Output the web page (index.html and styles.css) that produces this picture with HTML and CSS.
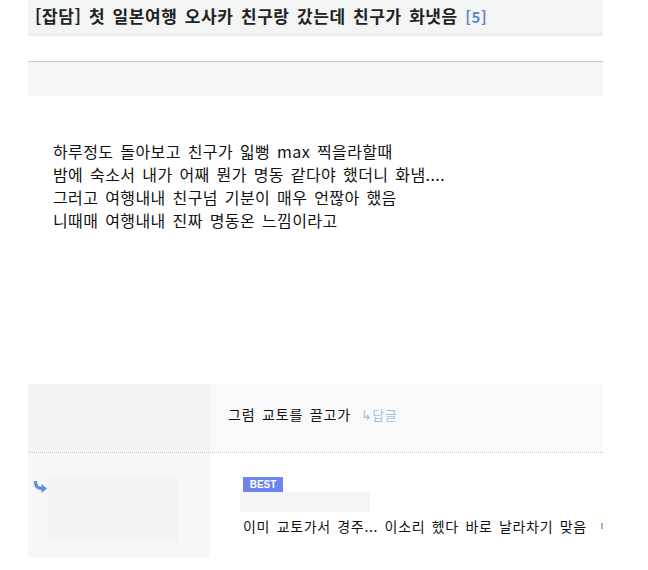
FILE: index.html
```html
<!DOCTYPE html>
<html lang="ko">
<head>
  <meta charset="UTF-8" />
  <title>[잡담] 첫 일본여행 오사카 친구랑 갔는데 친구가 화냇음</title>
  <link rel="stylesheet" href="styles.css">
</head>
<body>
  <div class="wrap">
    <div class="title-bar">[잡담] 첫 일본여행 오사카 친구랑 갔는데 친구가 화냇음 <span class="count">[5]</span></div>
    <div class="meta"></div>
    <div class="info-bar"></div>

    <div class="article">
      <p>하루정도 돌아보고 친구가 읿뻥 max 찍을라할때</p>
      <p>밤에 숙소서 내가 어째 뭔가 명동 같다야 했더니 화냄....</p>
      <p>그러고 여행내내 친구넘 기분이 매우 언짢아 했음</p>
      <p>니때매 여행내내 진짜 명동온 느낌이라고</p>
    </div>

    <div class="comments">
      <div class="row row-first">
        <div class="side"></div>
        <div class="body">
          <span class="text">그럼 교토를 끌고가</span>
          <span class="reply">↳답글</span>
        </div>
      </div>
      <div class="row row-reply">
        <div class="side">
          <svg class="arrow" width="15" height="12" viewBox="0 0 15 12">
            <path d="M2.5 1 C2.5 5.5 4.5 7.5 9 7.5" fill="none" stroke="#5b8fe3" stroke-width="3.2" stroke-linecap="round"/>
            <path d="M8.5 3 L14 7.5 L8.5 12 Z" fill="#5b8fe3"/>
          </svg>
          <div class="avatar"></div>
        </div>
        <div class="body">
          <div class="best">BEST</div>
          <div class="nick"></div>
          <div class="line">
            <span class="text">이미 교토가서 경주... 이소리 헸다 바로 날라차기 맞음</span>
            <span class="mark"></span>
          </div>
        </div>
      </div>
    </div>
  </div>
</body>
</html>
```

FILE: styles.css
```css
body {
  margin: 0;
  background: #fff;
  color: #111;
  font-family: "Noto Sans CJK KR", "Noto Sans", sans-serif;
}
.wrap {
  margin-left: 28px;
  width: 575px;
}
.title-bar {
  height: 33px;
  line-height: 31px;
  padding-left: 7px;
  background: #f3f4f4;
  border-bottom: 3px solid #ececec;
  font-size: 17px;
  font-weight: bold;
  letter-spacing: 0.6px;
  word-spacing: 2px;
  color: #222;
}
.title-bar .count {
  color: #5f86c8;
  font-size: 15px;
}
.meta {
  height: 25px;
  border-bottom: 1px solid #c8c8c8;
}
.info-bar {
  height: 34px;
  background: #f6f6f6;
}
.article {
  padding: 44px 0 0 25px;
  height: 244px;
  font-size: 16px;
  line-height: 23px;
  letter-spacing: 0.4px;
  word-spacing: 2px;
  color: #111;
}
.article p {
  margin: 0;
}
.row {
  display: flex;
}
.row .side {
  width: 182px;
  flex-shrink: 0;
}
.row-first {
  height: 68px;
  border-bottom: 1px dotted #c4c4c4;
}
.row-first .side {
  background: #f3f3f3;
}
.row-first .body {
  flex: 1;
  background: #f9f9f9;
  padding: 19px 0 0 18px;
  font-size: 14px;
  line-height: 22px;
}
.row-first .text {
  letter-spacing: 0.8px;
  word-spacing: 2px;
}
.reply {
  margin-left: 6px;
  font-size: 13px;
  letter-spacing: 0.5px;
  color: #a6bde2;
}
.row-reply {
  height: 105px;
}
.row-reply .side {
  background: #f7f7f7;
  display: flex;
  align-items: flex-start;
  padding: 23px 0 0 5px;
  box-sizing: border-box;
}
.arrow {
  margin-top: 5px;
}
.avatar {
  width: 130px;
  height: 66px;
  background: #f3f3f3;
}
.row-reply .body {
  flex: 1;
  padding: 24px 0 0 30px;
}
.best {
  margin-left: 3px;
  width: 40px;
  height: 15px;
  line-height: 15px;
  text-align: center;
  background: #6c84ec;
  color: #fff;
  font-family: "Liberation Sans", sans-serif;
  font-size: 10px;
  font-weight: bold;
}
.nick {
  width: 130px;
  height: 20px;
  background: #f5f5f5;
}
.line {
  display: flex;
  align-items: center;
  padding-left: 3px;
  margin-top: 3px;
  font-size: 14px;
  line-height: 22px;
  letter-spacing: 0.65px;
  word-spacing: 2px;
}
.mark {
  margin-left: 14px;
  width: 2px;
  height: 6px;
  background: #9db4e8;
}
```
